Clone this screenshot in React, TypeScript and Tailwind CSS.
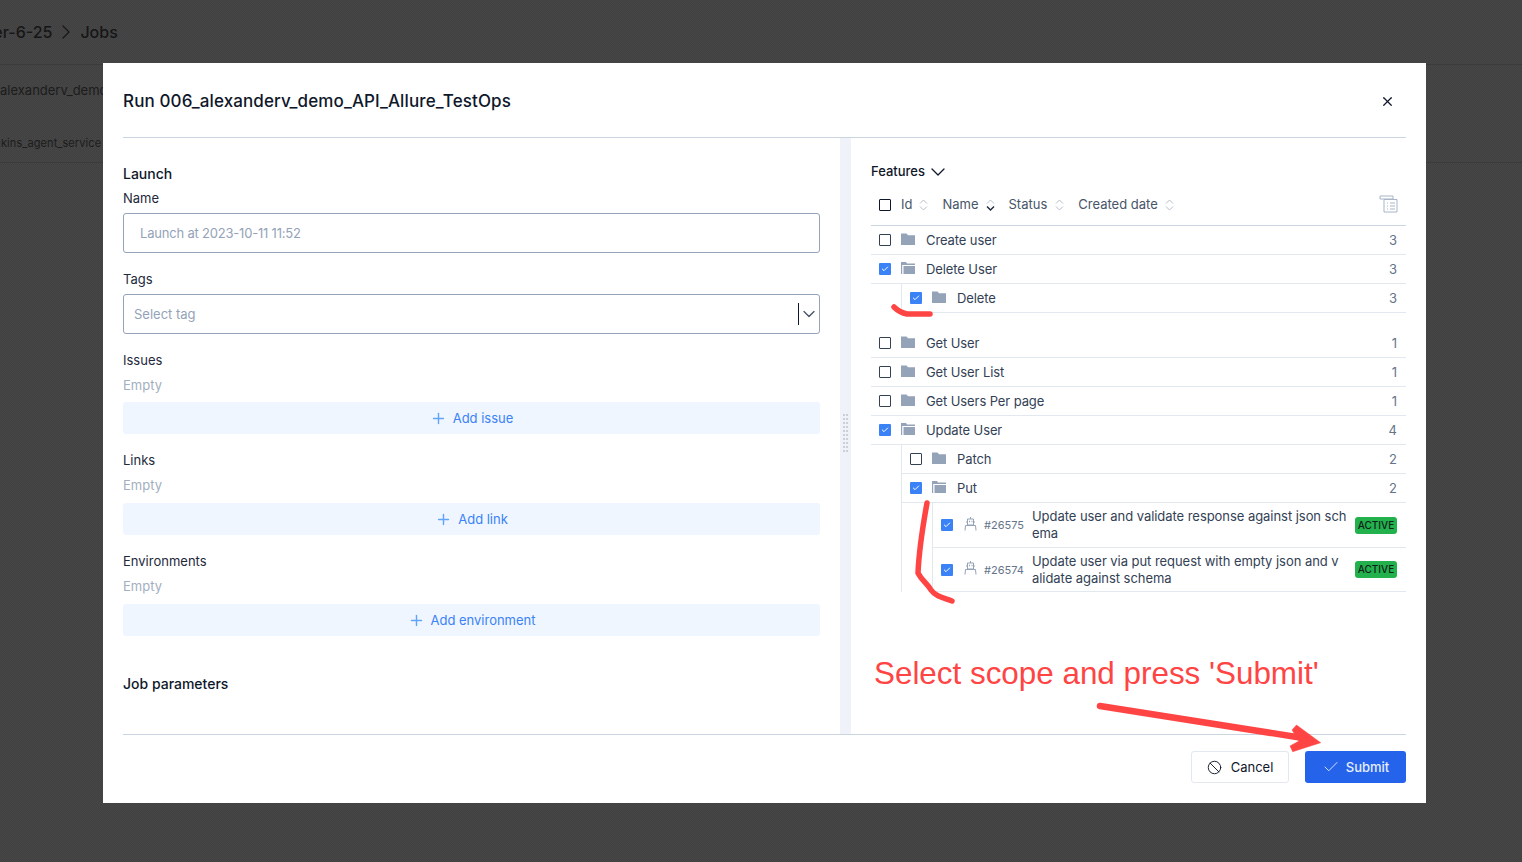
import { Ban, Check, ChevronDown, ChevronRight, Plus, X } from "lucide-react";

type TreeRow = { name: string; count: number; checked?: boolean; open?: boolean };

const topRows: TreeRow[] = [
  { name: "Get User", count: 1 },
  { name: "Get User List", count: 1 },
  { name: "Get Users Per page", count: 1 },
];

function Checkbox({ checked }: { checked?: boolean }) {
  if (checked) {
    return (
      <span className="flex h-3 w-3 shrink-0 items-center justify-center rounded-[1px] bg-[#3b82f6]">
        <Check className="h-2 w-2 text-white" strokeWidth={3} />
      </span>
    );
  }
  return <span className="h-3 w-3 shrink-0 rounded-[1px] border border-[#334155]" />;
}

function FolderIcon({ open }: { open?: boolean }) {
  if (open) {
    return (
      <svg width="14" height="12" viewBox="0 0 14 12" className="block shrink-0 fill-[#94a3b8]">
        <path d="M0 0h5l1 1.5h8V3H1.2v9H0z" />
        <path d="M2.5 4H14v8H2.5z" />
      </svg>
    );
  }
  return (
    <svg width="14" height="12" viewBox="0 0 14 12" className="block shrink-0 fill-[#94a3b8]">
      <path d="M0 .5h5.5L7 2.2h7V12H0z" />
    </svg>
  );
}

function RobotIcon() {
  return (
    <svg width="13" height="14" viewBox="0 0 13 14" fill="none" className="block shrink-0 stroke-[#94a3b8]">
      <path d="M6.500 0v2M3.500 2h6v6h-6zM2 5h1.500M9.500 5H11M1.500 8.500h10l.5 5M1.500 8.500l-.5 5" />
      <path d="M5 4.500h1M7.500 4.500h1" strokeWidth="1.4" />
    </svg>
  );
}

function SortIcon({ active }: { active?: boolean }) {
  return (
    <svg width="9" height="14" viewBox="0 0 9 14" fill="none" className="block shrink-0">
      <path d="M1 5.5 4.5 2 8 5.5" className="stroke-[#b6c0cd]" />
      <path d="M1 8.5 4.5 12 8 8.5" className={active ? "stroke-[#1e293b]" : "stroke-[#b6c0cd]"} strokeWidth={active ? 1.4 : 1} />
    </svg>
  );
}

function Row({ name, count, checked, open }: TreeRow) {
  return (
    <div className="flex h-[29px] items-center border-b border-[#e2e8f0] pl-2 pr-[9px]">
      <Checkbox checked={checked} />
      <span className="ml-[10px] -mt-[2px]">
        <FolderIcon open={open} />
      </span>
      <span className="ml-[11px] flex-1 pt-px text-[13px] tracking-[-0.1px] text-[#334155]">{name}</span>
      <span className="pt-px text-[13px] text-[#64748b]">{count}</span>
    </div>
  );
}

function TestRow({ id, lines }: { id: string; lines: string[] }) {
  return (
    <div className="flex h-[45px] items-center border-b border-[#e2e8f0] pl-2 pr-[9px] last:h-[44px]">
      <Checkbox checked />
      <span className="ml-[11px] -mt-[3px]">
        <RobotIcon />
      </span>
      <span className="ml-[7px] w-[48px] shrink-0 pt-px text-[11px] text-[#64748b]">{id}</span>
      <span className="flex-1 text-[13px] leading-[17px] tracking-[-0.05px] text-[#334155]">
        {lines.map((line) => (
          <span key={line} className="block whitespace-nowrap">
            {line}
          </span>
        ))}
      </span>
      <span className="flex h-[17px] w-[42px] items-center justify-center rounded-[3px] bg-[#22b14c] text-[10px] font-medium text-[#10231a]">
        ACTIVE
      </span>
    </div>
  );
}

function AddButton({ label, className }: { label: string; className: string }) {
  return (
    <button className={`flex h-8 w-full items-center justify-center gap-[6px] rounded-[3px] bg-[#eff6ff] pt-px text-[13px] tracking-[-0.02px] text-[#3b82f6] ${className}`}>
      <Plus className="h-[17px] w-[17px] text-[#60a5fa]" strokeWidth={2} />
      {label}
    </button>
  );
}

function Field({ label, button, className, gap }: { label: string; button: string; className: string; gap: string }) {
  return (
    <div className={className}>
      <div className="text-[13px] leading-[18px] text-[#1e293b]">{label}</div>
      <div className="mt-[7px] text-[13px] leading-[18px] text-[#a3afc0]">Empty</div>
      <AddButton label={button} className={gap} />
    </div>
  );
}

export default function App() {
  return (
    <div className="relative h-[862px] w-full overflow-hidden bg-[conic-gradient(#404040_25%,#474747_0_50%,#404040_0_75%,#474747_0)] bg-[length:2px_2px] font-['Inter',sans-serif]">
      <div className="flex h-[65px] items-center border-b border-[#3b3b3b] text-[16px] font-medium text-[#161616]">
        <span className="-ml-[12px]">ter-6-25</span>
        <ChevronRight className="mx-[2px] h-6 w-6" strokeWidth={1.2} />
        <span>Jobs</span>
      </div>
      <div className="flex h-[98px] flex-col border-b border-[#3b3b3b] text-[#1c1c1c]">
        <div className="mt-4 text-[13px] leading-[18px]">alexanderv_demo</div>
        <div className="-ml-[15px] mt-[36px] text-[11px] leading-[16px] tracking-[0.1px]">jenkins_agent_service</div>
      </div>

      <div className="absolute left-[103px] top-[63px] flex h-[740px] w-[1323px] flex-col bg-white px-5 text-[#0f172a]">
        <div className="flex h-[75px] shrink-0 items-center justify-between border-b border-[#cbd5e1] pt-[3px]">
          <h1 className="text-[17px] font-medium tracking-[0.12px]">Run 006_alexanderv_demo_API_Allure_TestOps</h1>
          <X className="mr-[11px] h-[15px] w-[15px]" strokeWidth={2} />
        </div>

        <div className="flex min-h-0 flex-1 border-b border-[#cbd5e1]">
          <div className="w-[717px] shrink-0 pr-5">
            <div className="mt-[26px] text-[14px] font-medium leading-[20px]">Launch</div>
            <div className="mt-[5px] text-[13px] leading-[18px] text-[#1e293b]">Name</div>
            <div className="mt-[6px] flex h-10 items-center rounded-[3px] border border-[#94a3b8] pl-4 pt-px text-[13px] tracking-[-0.2px] text-[#94a3b8]">
              Launch at 2023-10-11 11:52
            </div>
            <div className="mt-[17px] text-[13px] leading-[18px] text-[#1e293b]">Tags</div>
            <div className="mt-[6px] flex h-10 items-center rounded-[3px] border border-[#94a3b8] pl-[10px] text-[13px] text-[#94a3b8]">
              <span className="flex-1 pt-px">Select tag</span>
              <span className="h-[22px] w-px bg-[#0f172a]" />
              <ChevronDown className="h-5 w-5 text-[#475569]" strokeWidth={1.6} />
            </div>
            <Field label="Issues" button="Add issue" className="mt-[17px]" gap="mt-2" />
            <Field label="Links" button="Add link" className="mt-[17px]" gap="mt-[9px]" />
            <Field label="Environments" button="Add environment" className="mt-[17px]" gap="mt-[9px]" />
            <div className="mt-[38px] text-[14px] font-medium leading-[20px]">Job parameters</div>
          </div>

          <div className="flex w-[11px] shrink-0 items-center justify-center bg-[#eff3f9]">
            <div className="mt-[-7px] grid grid-cols-2 gap-x-px gap-y-[2px]">
              {Array.from({ length: 20 }, (_, i) => (
                <span key={i} className="h-[2px] w-[2px] bg-[#cbd0d6]" />
              ))}
            </div>
          </div>

          <div className="min-w-0 flex-1 pl-5">
            <div className="mt-[25px] flex h-[18px] items-center gap-[1px] text-[13px] font-medium">
              Features
              <ChevronDown className="h-6 w-6" strokeWidth={1.3} />
            </div>
            <div className="mt-[2px] flex h-[43px] items-center border-b border-[#cbd5e1] pl-2 pr-2 pt-px text-[13px] text-[#475569]">
              <span className="h-3 w-3 shrink-0 rounded-[1px] border border-[#0f172a]" />
              <span className="ml-[10px]">Id</span>
              <span className="ml-[7px]"><SortIcon /></span>
              <span className="ml-[14px]">Name</span>
              <span className="ml-[7px]"><SortIcon active /></span>
              <span className="ml-[14px]">Status</span>
              <span className="ml-[8px]"><SortIcon /></span>
              <span className="ml-[14px]">Created date</span>
              <span className="ml-[7px]"><SortIcon /></span>
              <svg width="19" height="18" viewBox="0 0 19 18" fill="none" className="-mt-[1px] ml-auto stroke-[#a9b5c7]">
                <path d="M1 1h13v3H1zM5 4.5h13V17H5z" />
                <path d="M8 8h1M8 11h1M8 14h1M11 8h5M11 11h5M11 14h5" />
              </svg>
            </div>

            <Row name="Create user" count={3} />
            <Row name="Delete User" count={3} checked open />
            <div className="ml-[30px] border-l border-[#e2e8f0]">
              <Row name="Delete" count={3} checked />
            </div>

            <div className="h-4" />
            {topRows.map((r) => (
              <Row key={r.name} {...r} />
            ))}
            <Row name="Update User" count={4} checked open />
            <div className="ml-[30px] border-l border-[#e2e8f0]">
              <Row name="Patch" count={2} />
              <Row name="Put" count={2} checked open />
              <div className="ml-[30px] border-l border-[#e2e8f0]">
                <TestRow id="#26575" lines={["Update user and validate response against json sch", "ema"]} />
                <TestRow id="#26574" lines={["Update user via put request with empty json and v", "alidate against schema"]} />
              </div>
            </div>
          </div>
        </div>

        <div className="flex h-[68px] shrink-0 items-start justify-end gap-4 pt-4">
          <button className="flex h-8 w-[98px] items-center justify-center gap-[9px] rounded-[3px] border border-[#e2e8f0] text-[13px] text-[#0f172a]">
            <Ban className="h-[15px] w-[15px]" strokeWidth={1.5} />
            <span className="pt-px">Cancel</span>
          </button>
          <button className="flex h-8 w-[101px] items-center justify-center gap-[6px] rounded-[3px] bg-[#2563eb] text-[13px] font-medium text-[#e6effe]">
            <Check className="h-[18px] w-[18px]" strokeWidth={1.2} />
            <span className="pt-px">Submit</span>
          </button>
        </div>
      </div>

      {/* red annotations sit on top of the screenshot */}
      <svg width="1522" height="862" fill="none" className="pointer-events-none absolute left-0 top-0 stroke-[#ff4444]">
        <path d="M894 307c4 4 8 6 13 7h23" strokeWidth="5.5" strokeLinecap="round" />
        <path d="M927 503c-4 22-8 47-9 70 4 8 9 10 13 17 5 7 13 8 21 11" strokeWidth="5.5" strokeLinecap="round" strokeLinejoin="round" />
        <path d="M1100 706 1306 738.500" strokeWidth="6.500" strokeLinecap="round" />
        <path d="M1296.500 725 1320.700 742.700 1292.700 751.700 1290 746 1299 741 1292 730Z" className="fill-[#ff4444]" strokeWidth="0.5" />
      </svg>
      <div className="absolute left-[874px] top-[654px] whitespace-nowrap font-['Liberation_Sans',sans-serif] text-[31.4px] leading-[40px] text-[#ff4444]">
        Select scope and press 'Submit'
      </div>
    </div>
  );
}
